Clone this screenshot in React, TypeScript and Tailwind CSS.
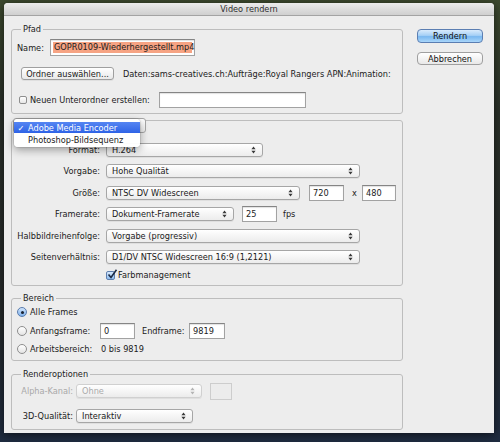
import React from 'react';

// Photoshop "Video rendern" dialog, Mac OS X Aqua look

const Arrows: React.FC<{ disabled?: boolean }> = ({ disabled }) => (
    <svg width="5" height="8" viewBox="0 0 5 8" className="shrink-0">
        <path d="M2.5 0.6 L4.6 3.2 L0.4 3.2 Z M2.5 7.4 L4.6 4.8 L0.4 4.8 Z" fill={disabled ? '#b4b4b4' : '#3a3a3a'} />
    </svg>
);

const Select: React.FC<{ value: string; className: string; disabled?: boolean }> = ({ value, className, disabled }) => (
    <div
        className={`h-[14px] flex items-center justify-between pl-[5px] pr-[6px] rounded-[3px] border bg-gradient-to-b from-white to-[#ececec] shadow-[0_1px_0_rgba(0,0,0,0.06)] ${
            disabled ? 'border-[#d0d0d0] text-[#aaaaaa]' : 'border-[#a6a6a6] text-[#1a1a1a]'
        } ${className}`}
    >
        <span className="whitespace-nowrap">{value}</span>
        <Arrows disabled={disabled} />
    </div>
);

const TextInput: React.FC<{ value?: string; className: string }> = ({ value, className }) => (
    <div
        className={`h-[16px] flex items-center pl-[3px] bg-white border border-[#a2a2a2] border-t-[#858585] shadow-[inset_0_1px_1px_rgba(0,0,0,0.12)] ${className}`}
    >
        {value}
    </div>
);

const Checkbox: React.FC<{ checked?: boolean }> = ({ checked }) =>
    checked ? (
        <div className="relative w-[9px] h-[9px] rounded-[2px] border border-[#5f7fae] bg-gradient-to-b from-[#d7e8fb] to-[#8dbcef] shrink-0">
            <svg width="11" height="11" viewBox="0 0 11 11" className="absolute left-[0px] top-[-3px]">
                <path d="M1.5 5.5 L4 8.5 L9.5 0.8" stroke="#1c2a44" strokeWidth="1.6" fill="none" />
            </svg>
        </div>
    ) : (
        <div className="w-[8px] h-[8px] rounded-[2px] border border-[#8e8e8e] bg-gradient-to-b from-white to-[#e6e6e6] shrink-0" />
    );

const Radio: React.FC<{ checked?: boolean }> = ({ checked }) =>
    checked ? (
        <div className="w-[10px] h-[10px] rounded-full border border-[#5a7cad] bg-gradient-to-b from-[#d0e4fb] to-[#7fb2ec] flex items-center justify-center shrink-0">
            <div className="w-[3px] h-[3px] rounded-full bg-[#1a2233]" />
        </div>
    ) : (
        <div className="w-[10px] h-[10px] rounded-full border border-[#8e8e8e] bg-gradient-to-b from-white to-[#e4e4e4] shrink-0" />
    );

const Row: React.FC<{ label: string; children: React.ReactNode }> = ({ label, children }) => (
    <div className="flex items-center h-[21.4px]">
        <span className="w-[88px] text-right shrink-0 whitespace-nowrap">{label}</span>
        <div className="ml-[6px] flex items-center">{children}</div>
    </div>
);

export default function App() {
    return (
        <div className="w-[500px] h-[442px] overflow-hidden bg-[linear-gradient(180deg,#3d4a2f_0%,#2b312a_25%,#272b2b_70%,#1f2c41_100%)] pt-[3px] pl-[4px] font-['DejaVu_Sans',sans-serif] text-[8.2px] leading-[10px] text-[#1b1b1b]">
            <div className="w-[490px] h-[430px] bg-[#ededed] rounded-t-[4px] shadow-[0_2px_10px_rgba(0,0,0,0.6)] flex flex-col overflow-hidden">
                {/* title bar */}
                <div className="h-[13px] shrink-0 bg-gradient-to-b from-[#ececec] to-[#cfcfcf] border-b border-[#a3a3a3] flex items-center justify-center text-[#2e2e2e]">
                    Video rendern
                </div>

                <div className="flex">
                    <div className="ml-[7px] w-[392px] flex flex-col">
                        {/* Pfad */}
                        <fieldset className="mt-[8px] border border-[#bdbdbd] rounded-[3px] pb-[5px]">
                            <legend className="ml-[9px] px-[2px] leading-[10px] text-[#222]">Pfad</legend>
                            <div className="flex items-center h-[17px] mt-[5px] pl-[5px]">
                                <span className="w-[33px] shrink-0">Name:</span>
                                <div className="w-[145px] h-[17px] flex items-center px-[2px] bg-white border border-[#a2a2a2] border-t-[#858585] shadow-[inset_0_1px_1px_rgba(0,0,0,0.12)]">
                                    <span className="bg-[#f6a383] h-[11px] leading-[11px] pl-[1px] w-full whitespace-nowrap">
                                        GOPR0109-Wiederhergestellt.mp4
                                    </span>
                                </div>
                            </div>
                            <div className="flex items-center h-[13px] mt-[11px] pl-[9px]">
                                <div className="w-[93px] h-[13px] flex items-center justify-center rounded-[3px] border border-[#9f9f9f] bg-gradient-to-b from-white to-[#e9e9e9] shadow-[0_1px_0_rgba(0,0,0,0.06)]">
                                    Ordner auswählen...
                                </div>
                                <span className="ml-[9px] whitespace-nowrap">Daten:sams-creatives.ch:Aufträge:Royal Rangers APN:Animation:</span>
                            </div>
                            <div className="flex items-center h-[16px] mt-[12px] pl-[7px]">
                                <Checkbox />
                                <span className="ml-[3px] w-[129px] shrink-0 whitespace-nowrap">Neuen Unterordner erstellen:</span>
                                <TextInput className="w-[147px]" />
                            </div>
                        </fieldset>

                        {/* Format group with popup as title */}
                        <div className="relative mt-[6px] border border-[#bdbdbd] rounded-[3px] pt-[18.3px] pb-[2.5px]">
                            <Row label="Format:">
                                <Select value="H.264" className="w-[157px]" />
                            </Row>
                            <Row label="Vorgabe:">
                                <Select value="Hohe Qualität" className="w-[254px]" />
                            </Row>
                            <Row label="Größe:">
                                <Select value="NTSC DV Widescreen" className="w-[194px]" />
                                <TextInput value="720" className="ml-[9px] w-[35px]" />
                                <span className="ml-[8px] w-[10px]">x</span>
                                <TextInput value="480" className="w-[34px]" />
                            </Row>
                            <Row label="Framerate:">
                                <Select value="Dokument-Framerate" className="w-[128px]" />
                                <TextInput value="25" className="ml-[8px] w-[35px]" />
                                <span className="ml-[6px]">fps</span>
                            </Row>
                            <Row label="Halbbildreihenfolge:">
                                <Select value="Vorgabe (progressiv)" className="w-[254px]" />
                            </Row>
                            <Row label="Seitenverhältnis:">
                                <Select value="D1/DV NTSC Widescreen 16:9 (1,2121)" className="w-[254px]" />
                            </Row>
                            <div className="flex items-center h-[15px] pl-[94px]">
                                <Checkbox checked />
                                <span className="ml-[3px]">Farbmanagement</span>
                            </div>

                            {/* popup button underneath the open menu */}
                            <div className="absolute left-[1px] top-[-3px] w-[133px] h-[15px] rounded-[3px] border border-[#a6a6a6] bg-gradient-to-b from-white to-[#ececec]" />
                            {/* open popup menu */}
                            <div className="absolute left-[2px] top-[-2px] w-[126px] h-[28px] pt-[3px] bg-white/[0.97] rounded-[4px] shadow-[0_3px_8px_rgba(0,0,0,0.35),0_0_0_1px_rgba(0,0,0,0.08)]">
                                <div className="h-[11px] flex items-center bg-gradient-to-b from-[#5585f2] to-[#2f63e6] text-white">
                                    <span className="w-[14px] text-center">✓</span>
                                    <span className="whitespace-nowrap">Adobe Media Encoder</span>
                                </div>
                                <div className="h-[11px] flex items-center pl-[14px] mt-[1px] whitespace-nowrap">Photoshop-Bildsequenz</div>
                            </div>
                        </div>

                        {/* Bereich */}
                        <fieldset className="mt-[7px] border border-[#bdbdbd] rounded-[3px] pb-[1.5px]">
                            <legend className="ml-[9px] px-[2px] leading-[10px] text-[#222]">Bereich</legend>
                            <div className="flex items-center h-[18.5px] pl-[5px]">
                                <Radio checked />
                                <span className="ml-[3px]">Alle Frames</span>
                            </div>
                            <div className="flex items-center h-[18.5px] pl-[5px]">
                                <Radio />
                                <span className="ml-[3px] w-[70px] shrink-0">Anfangsframe:</span>
                                <TextInput value="0" className="w-[35px]" />
                                <span className="ml-[7px] w-[47px] shrink-0">Endframe:</span>
                                <TextInput value="9819" className="w-[36px]" />
                            </div>
                            <div className="flex items-center h-[18.5px] pl-[5px]">
                                <Radio />
                                <span className="ml-[3px] w-[71px] shrink-0">Arbeitsbereich:</span>
                                <span>0 bis 9819</span>
                            </div>
                        </fieldset>

                        {/* Renderoptionen */}
                        <fieldset className="mt-[8px] border border-[#bdbdbd] rounded-[3px] pb-[5px]">
                            <legend className="ml-[9px] px-[2px] leading-[10px] text-[#222]">Renderoptionen</legend>
                            <div className="flex items-center h-[17px] mt-[3.5px]">
                                <span className="w-[61px] text-right shrink-0 text-[#a9a9a9]">Alpha-Kanal:</span>
                                <Select value="Ohne" disabled className="ml-[3px] w-[126px]" />
                                <div className="ml-[8px] w-[22px] h-[17px] border border-[#cdcdcd] bg-[#ececec]" />
                            </div>
                            <div className="flex items-center h-[17px] mt-[7.5px]">
                                <span className="w-[61px] text-right shrink-0">3D-Qualität:</span>
                                <Select value="Interaktiv" className="ml-[3px] w-[117px]" />
                            </div>
                        </fieldset>
                    </div>

                    {/* buttons */}
                    <div className="ml-[14px] mt-[13px] flex flex-col gap-[9px]">
                        <div className="w-[66px] h-[14px] flex items-center justify-center rounded-[4px] border border-[#5b7eb2] bg-[linear-gradient(180deg,#d9ebfc_0%,#a6d0f6_45%,#7ab8f0_55%,#a9d6fa_100%)] text-[#111]">
                            Rendern
                        </div>
                        <div className="w-[66px] h-[13px] flex items-center justify-center rounded-[4px] border border-[#9f9f9f] bg-gradient-to-b from-white to-[#e8e8e8] text-[#111]">
                            Abbrechen
                        </div>
                    </div>
                </div>
            </div>
        </div>
    );
}
